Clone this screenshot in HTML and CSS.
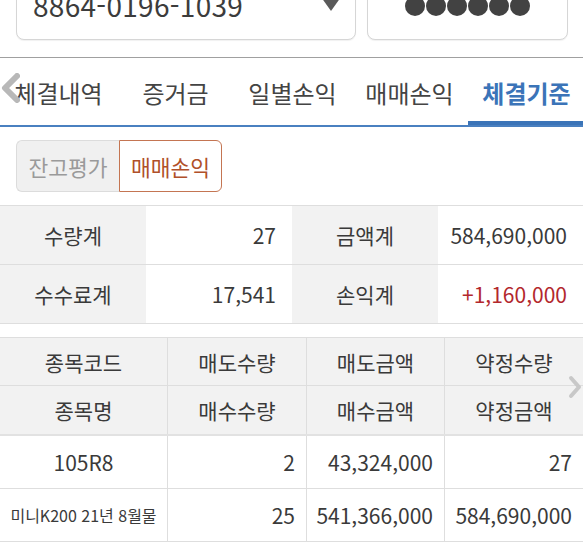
FILE: index.html
```html
<!DOCTYPE html>
<html lang="ko">
<head>
<meta charset="utf-8">
<link rel="stylesheet" href="styles.css">
</head>
<body>
<div class="top">
  <div class="box account">
    <span class="acct-no">8864-0196-1039</span>
    <span class="caret"></span>
  </div>
  <div class="box pw">
    <span class="dot"></span><span class="dot"></span><span class="dot"></span><span class="dot"></span><span class="dot"></span><span class="dot"></span>
  </div>
</div>

<div class="tabs">
  <svg class="chev-left" width="20" height="30" viewBox="0 0 20 30"><polyline points="17,3 5,15 17,27" fill="none" stroke="#b8b8b8" stroke-width="6" stroke-linejoin="round" stroke-linecap="round"/></svg>
  <div class="tab">체결내역</div>
  <div class="tab">증거금</div>
  <div class="tab">일별손익</div>
  <div class="tab">매매손익</div>
  <div class="tab active">체결기준</div>
</div>

<div class="seg">
  <div class="seg-item off">잔고평가</div>
  <div class="seg-item on">매매손익</div>
</div>

<div class="summary">
  <div class="s-row">
    <div class="s-label">수량계</div>
    <div class="s-val">27</div>
    <div class="s-label">금액계</div>
    <div class="s-val">584,690,000</div>
  </div>
  <div class="s-row">
    <div class="s-label">수수료계</div>
    <div class="s-val">17,541</div>
    <div class="s-label">손익계</div>
    <div class="s-val red">+1,160,000</div>
  </div>
</div>

<div class="grid">
  <svg class="chev-right" width="14" height="24" viewBox="0 0 14 24"><polyline points="3,3 11,12 3,21" fill="none" stroke="#c8c8c8" stroke-width="4" stroke-linejoin="round" stroke-linecap="round"/></svg>
  <div class="g-row head">
    <div class="c">종목코드</div><div class="c">매도수량</div><div class="c">매도금액</div><div class="c">약정수량</div>
  </div>
  <div class="g-row head last">
    <div class="c">종목명</div><div class="c">매수수량</div><div class="c">매수금액</div><div class="c">약정금액</div>
  </div>
  <div class="g-row body">
    <div class="c">105R8</div><div class="c r">2</div><div class="c r">43,324,000</div><div class="c r">27</div>
  </div>
  <div class="g-row body">
    <div class="c small">미니K200 21년 8월물</div><div class="c r">25</div><div class="c r">541,366,000</div><div class="c r">584,690,000</div>
  </div>
</div>
</body>
</html>
```

FILE: styles.css
```css
html, body {
  margin: 0;
  padding: 0;
  background: #ffffff;
}
body {
  width: 583px;
  height: 546px;
  overflow: hidden;
  font-family: "Noto Sans CJK KR", "Noto Sans", sans-serif;
  color: #3a3a3a;
}

/* top account inputs */
.top {
  box-sizing: border-box;
  height: 58px;
  padding: 0 15px 17px 16px;
  display: flex;
  align-items: flex-end;
  gap: 11px;
  overflow: hidden;
  border-bottom: 1px solid #a0a0a0;
}
.box {
  box-sizing: border-box;
  height: 64px;
  flex: none;
  border: 1.5px solid #d6d6d6;
  border-radius: 8px;
  background: #fff;
  box-shadow: 0 1px 1px rgba(0,0,0,0.06);
  position: relative;
}
.account {
  width: 340px;
  padding: 0 0 0 16px;
  display: flex;
  align-items: flex-end;
}
.acct-no {
  font-size: 28px;
  line-height: 1;
  padding-bottom: 20px;
  color: #3c3c3c;
  letter-spacing: 0.3px;
}
.caret {
  position: absolute;
  right: 14px;
  bottom: 28px;
  width: 0;
  height: 0;
  border-left: 10px solid transparent;
  border-right: 10px solid transparent;
  border-top: 14px solid #5a5a5a;
}
.pw {
  width: 201px;
  display: flex;
  justify-content: center;
  align-items: flex-end;
  gap: 1px;
  padding-bottom: 23px;
}
.dot {
  width: 20px;
  height: 20px;
  border-radius: 50%;
  background: #424242;
}

/* tabs */
.tabs {
  position: relative;
  height: 67px;
  display: flex;
  align-items: center;
  padding-top: 1px;
  box-sizing: border-box;
  height: 69px;
  overflow: hidden;
  border-bottom: 2px solid #4a80c0;
}
.chev-left {
  position: absolute;
  left: 0;
  top: 15px;
  z-index: 1;
}
.tab {
  width: 117px;
  flex: none;
  text-align: center;
  font-size: 24px;
  color: #444;
  position: relative;
  height: 100%;
  display: flex;
  align-items: center;
  justify-content: center;
}
.tab.active {
  color: #3b74b8;
  font-weight: 700;
}
.tab.active::after {
  content: "";
  position: absolute;
  left: 0;
  right: 0;
  bottom: 0;
  height: 4px;
  background: #3b74b8;
}

/* segmented */
.seg {
  display: flex;
  margin: 13px 0 0 16px;
  height: 52px;
  width: 206px;
}
.seg-item {
  box-sizing: border-box;
  width: 103px;
  display: flex;
  align-items: center;
  justify-content: center;
  font-size: 21.5px;
}
.seg-item.off {
  background: #f0f0f0;
  color: #9a9a9a;
  border: 1px solid #dcdcdc;
  border-right: none;
  border-radius: 6px 0 0 6px;
}
.seg-item.on {
  background: #fff;
  color: #b0502a;
  border: 1px solid #c47552;
  border-radius: 0 6px 6px 0;
}

/* summary */
.summary {
  margin-top: 13px;
  border-top: 1px solid #dedede;
}
.s-row {
  display: grid;
  grid-template-columns: 146px 146px 146px 145px;
  height: 58px;
  border-bottom: 1px solid #dedede;
}
.s-label {
  background: #f2f2f2;
  display: flex;
  align-items: center;
  justify-content: center;
  font-size: 21px;
}
.s-val {
  display: flex;
  align-items: center;
  justify-content: flex-end;
  padding-right: 16px;
  font-size: 21px;
}
.s-val.red { color: #b3282d; }

/* detail grid */
.grid {
  position: relative;
  margin-top: 13px;
  border-top: 1px solid #dedede;
}
.chev-right {
  position: absolute;
  right: 1px;
  top: 37px;
}
.g-row {
  display: grid;
  grid-template-columns: 167px 139px 138px 139px;
  border-bottom: 1px solid #dedede;
}
.g-row.head {
  background: #f2f2f2;
  height: 47px;
}
.g-row.head.last {
  height: 48px;
  border-bottom: 2px solid #e2e2e2;
}
.g-row.body {
  height: 52px;
}
.c {
  display: flex;
  align-items: center;
  justify-content: center;
  font-size: 21px;
  border-left: 1px solid #dedede;
}
.c:first-child { border-left: none; }
.c.r {
  justify-content: flex-end;
  padding-right: 11px;
}
.c.small {
  font-size: 16px;
  letter-spacing: 0;
}
```
